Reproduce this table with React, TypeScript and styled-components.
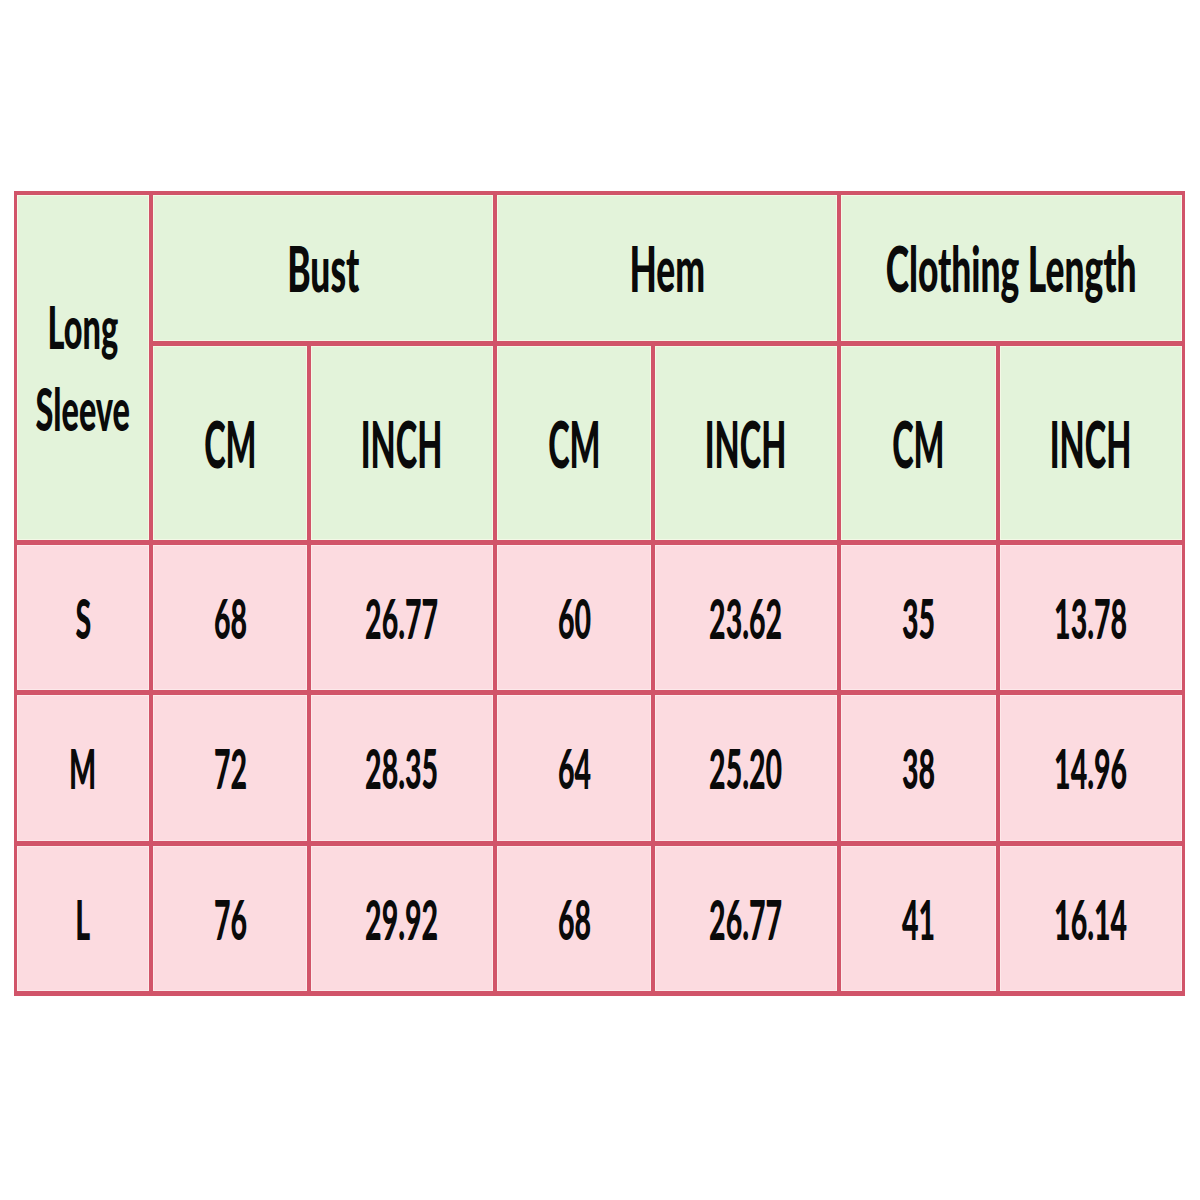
import React from "react";
import styled, { createGlobalStyle } from "styled-components";

const Global = createGlobalStyle`
  html, body { margin: 0; padding: 0; background: #ffffff; }
  body { font-family: "Lato", "Liberation Sans", sans-serif; }
`;

const Page = styled.div`
  width: 1200px;
  height: 1200px;
  padding: 191px 0 0 14px;
  box-sizing: border-box;
`;

const Grid = styled.div`
  display: inline-grid;
  grid-template-columns: 132px 154px 182px 154px 182px 155px 182px;
  grid-template-rows: 146px 194px 145px 146px 145px;
  column-gap: 4px;
  row-gap: 5px;
  padding: 4px 3px 5px 3px;
  background: #d15469;
`;

const Cell = styled.div<{ $tone: "green" | "pink"; $col?: string; $row?: string }>`
  display: flex;
  align-items: center;
  justify-content: center;
  overflow: visible;
  background: ${(p) => (p.$tone === "green" ? "#e3f3da" : "#fcdbe0")};
  box-shadow: inset 0 0 0 1px ${(p) => (p.$tone === "green" ? "#f4f8e6" : "#fde9ea")};
  ${(p) => (p.$col ? `grid-column: ${p.$col};` : "")}
  ${(p) => (p.$row ? `grid-row: ${p.$row};` : "")}
`;

const Label = styled.span<{ $size: number; $sx: number; $lh?: number }>`
  display: inline-block;
  white-space: nowrap;
  text-align: center;
  font-family: "Lato", "Liberation Sans", sans-serif;
  font-weight: 900;
  color: #0a0a0a;
  font-size: ${(p) => p.$size}px;
  line-height: ${(p) => (p.$lh ? `${p.$lh}px` : "1")};
  transform: scaleX(${(p) => p.$sx});
  transform-origin: center;
`;

const groups = ["Bust", "Hem", "Clothing Length"];

const rows: [string, string[]][] = [
  ["S", ["68", "26.77", "60", "23.62", "35", "13.78"]],
  ["M", ["72", "28.35", "64", "25.20", "38", "14.96"]],
  ["L", ["76", "29.92", "68", "26.77", "41", "16.14"]],
];

export default function App() {
  return (
    <>
      <Global />
      <Page>
        <Grid>
          <Cell $tone="green" $row="1 / span 2">
            <Label $size={59} $sx={0.55} $lh={82}>
              Long
              <br />
              Sleeve
            </Label>
          </Cell>
          {groups.map((g) => (
            <Cell key={g} $tone="green" $col="span 2">
              <Label $size={62} $sx={0.57}>{g}</Label>
            </Cell>
          ))}
          {groups.map((g) =>
            ["CM", "INCH"].map((u) => (
              <Cell key={g + u} $tone="green">
                <Label $size={65} $sx={0.5}>{u}</Label>
              </Cell>
            ))
          )}
          {rows.map(([size, vals]) => (
            <React.Fragment key={size}>
              <Cell $tone="pink">
                <Label $size={56} $sx={0.51}>{size}</Label>
              </Cell>
              {vals.map((v, i) => (
                <Cell key={i} $tone="pink">
                  <Label $size={56} $sx={0.51}>{v}</Label>
                </Cell>
              ))}
            </React.Fragment>
          ))}
        </Grid>
      </Page>
    </>
  );
}
